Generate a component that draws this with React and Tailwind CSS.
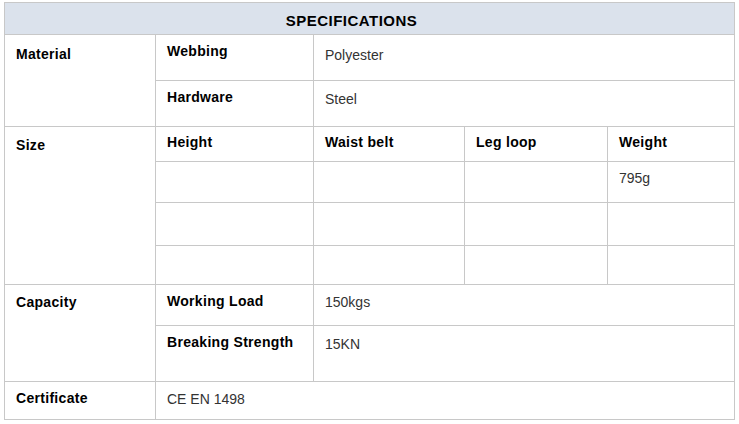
import React from "react";

/* one grid cell: right + bottom rule, the grid itself carries the left + top rule */
function Cell({ className = "", children }) {
  return (
    <div className={`border-r border-b border-[#c8c8c8] pl-[11px] ${className}`}>
      {children}
    </div>
  );
}

const label = "font-bold text-black tracking-[0.3px]";
const value = "text-[#333333]";

export default function App() {
  return (
    <div className="min-h-screen bg-white pl-[4px] pt-[2px] font-['Liberation_Sans',Arial,sans-serif] text-[14px] leading-[16px]">
      <div className="grid w-[731px] grid-cols-[151px_158px_151px_143px_127px] grid-rows-[32px_46px_46px_35px_41px_43px_39px_41px_56px_38px] border-l border-t border-[#c8c8c8]">
        {/* HEADER */}
        <div className="col-span-5 border-r border-b border-[#c8c8c8] bg-[#dbe2ec] pt-[9px] pr-[36px] text-center text-[15px] leading-[17px] font-bold tracking-[0.5px] text-black">
          SPECIFICATIONS
        </div>

        {/* MATERIAL */}
        <Cell className={`row-span-2 pt-[11px] ${label}`}>Material</Cell>
        <Cell className={`pt-[8px] ${label}`}>Webbing</Cell>
        <Cell className={`col-span-3 pt-[12px] ${value}`}>Polyester</Cell>
        <Cell className={`pt-[8px] ${label}`}>Hardware</Cell>
        <Cell className={`col-span-3 pt-[10px] ${value}`}>Steel</Cell>

        {/* SIZE */}
        <Cell className={`row-span-4 pt-[10px] ${label}`}>Size</Cell>
        <Cell className={`pt-[7px] ${label}`}>Height</Cell>
        <Cell className={`pt-[7px] ${label}`}>Waist belt</Cell>
        <Cell className={`pt-[7px] ${label}`}>Leg loop</Cell>
        <Cell className={`pt-[7px] ${label}`}>Weight</Cell>
        <Cell />
        <Cell />
        <Cell />
        <Cell className={`pt-[8px] ${value}`}>795g</Cell>
        <Cell />
        <Cell />
        <Cell />
        <Cell />
        <Cell />
        <Cell />
        <Cell />
        <Cell />

        {/* CAPACITY */}
        <Cell className={`row-span-2 pt-[9px] ${label}`}>Capacity</Cell>
        <Cell className={`pt-[8px] ${label}`}>Working Load</Cell>
        <Cell className={`col-span-3 pt-[9px] ${value}`}>150kgs</Cell>
        <Cell className={`pt-[8px] ${label}`}>Breaking Strength</Cell>
        <Cell className={`col-span-3 pt-[10px] ${value}`}>15KN</Cell>

        {/* CERTIFICATE */}
        <Cell className={`pt-[8px] ${label}`}>Certificate</Cell>
        <Cell className={`col-span-4 pt-[9px] ${value}`}>CE EN 1498</Cell>
      </div>
    </div>
  );
}
